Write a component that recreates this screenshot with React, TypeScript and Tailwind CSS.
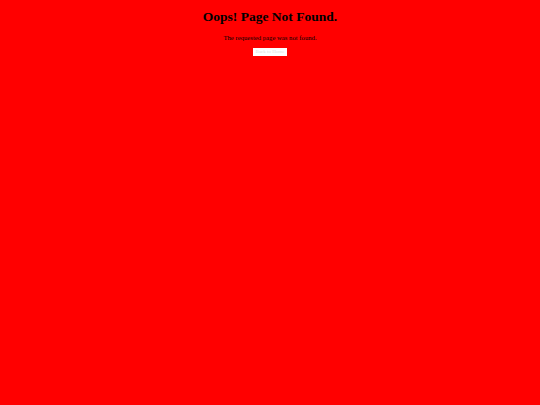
export default function App() {
  return (
    <div className="min-h-[405px] w-full bg-[#ff0000] font-['Liberation_Serif',serif] text-black">
      <div className="flex flex-col items-center pt-[8px]">
        <h1 className="text-[13.5px] font-bold leading-[18px]">Oops! Page Not Found.</h1>
        <p className="mt-[7px] text-[6.7px] leading-[9px]">The requested page was not found.</p>
        <button className="mt-[6px] h-[8px] w-[34px] bg-white text-[5px] leading-[8px] text-[#dddddd]">
          Back to Home
        </button>
      </div>
    </div>
  );
}
